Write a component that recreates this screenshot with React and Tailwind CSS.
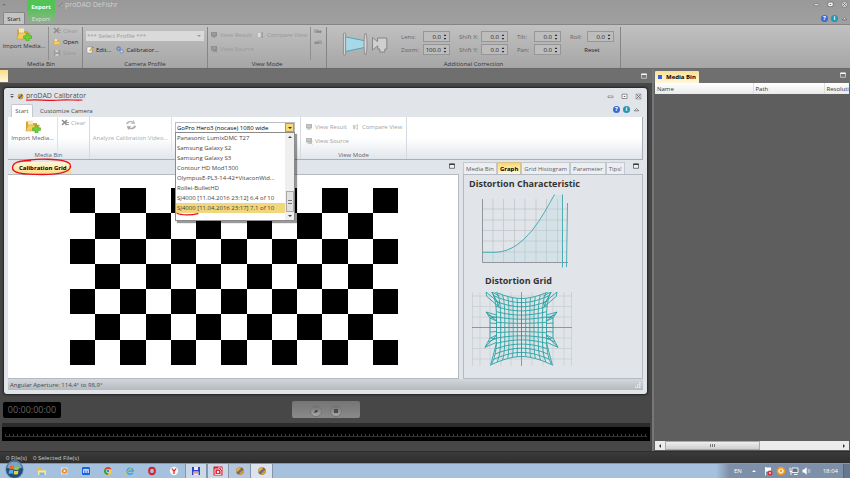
import { useState } from 'react'
import clsx from 'clsx'

const PROFILES = [
  'Panasonic LumixDMC T27',
  'Samsung Galaxy S2',
  'Samsung Galaxy S3',
  'Contour HD Mod1300',
  'OlympusE-PL3-14-42+VitaconWid...',
  'Rollei-BulletHD',
  'SJ4000 [11.04.2016 23:12] 6,4 of 10',
  'SJ4000 [11.04.2016 23:17] 7,1 of 10',
]

const CORRECTIONS = [
  [
    { id: 'lens', label: 'Lens:', value: '0.0' },
    { id: 'zoom', label: 'Zoom:', value: '100.0' },
  ],
  [
    { id: 'shiftx', label: 'Shift X:', value: '0.0' },
    { id: 'shifty', label: 'Shift Y:', value: '0.0' },
  ],
  [
    { id: 'tilt', label: 'Tilt:', value: '0.0' },
    { id: 'pan', label: 'Pan:', value: '0.0' },
  ],
]

// ---------- icons ----------

function FolderIcon({ plus, className }) {
  return (
    <svg viewBox="0 0 16 14" className={className}>
      <path d="M1 2.5h4.5l1 1.5H12v7.5H1z" fill="#d9a437" />
      <path d="M3 1.5h5v5H3z" fill="#f6e7b4" />
      <path d="M0.8 12 3 6h11.5L12 12z" fill="#f5cf63" stroke="#c79228" strokeWidth=".5" />
      {plus && <path d="M10 6.5h3v2.3h2.5v2.7H13V14h-3v-2.5H7.6V8.8H10z" fill="#6fd03a" stroke="#3f9a1c" strokeWidth=".5" />}
    </svg>
  )
}

function ClearIcon() {
  return (
    <svg viewBox="0 0 8 8" className="size-2">
      <path d="M1 1l5 5M6 1 1 6" stroke="#888" strokeWidth="1.4" />
      <path d="M4 3.5h4M4 5.5h4" stroke="#a0a0a0" />
    </svg>
  )
}

function SaveIcon() {
  return (
    <svg viewBox="0 0 8 8" className="size-2">
      <path d="M1 1h5.4l.8.8V7H1z" fill="#999" />
      <path d="M2.3 1h3v2.4h-3zM2.3 5h3.4v2H2.3z" fill="#ccc" />
    </svg>
  )
}

function EditIcon() {
  return (
    <svg viewBox="0 0 8 8" className="size-2">
      <path d="M1 1h5v6H1z" fill="#f4f4f4" stroke="#777" strokeWidth=".4" />
      <path d="m3 5.6.5-1.7L6.4.8l1.1 1-3 3.2z" fill="#e5a62d" />
      <path d="m6.1 1.1.6-.6 1 .9-.6.7z" fill="#b5432c" />
    </svg>
  )
}

function CalibratorIcon() {
  return (
    <svg viewBox="0 0 8 8" className="size-2">
      <circle cx="2.6" cy="2.6" r="1.7" fill="none" stroke="#6682b5" strokeWidth="1.2" />
      <circle cx="5.6" cy="5.4" r="1.6" fill="#cfd9ee" stroke="#6682b5" strokeWidth=".9" />
    </svg>
  )
}

function ViewIcon({ kind, dark }) {
  const c = dark ? '#8c8c8c' : '#b5b5b5'
  return (
    <svg viewBox="0 0 8 8" className="size-2 shrink-0">
      {kind === 'compare' ? (
        <>
          <path d="M1 2h2.5v4H1z" fill={dark ? '#ddd' : '#ccc'} />
          <path d="M4.5 1.5H6v1.2H4.5zM4.5 3.4H6v1.2H4.5zM4.5 5.3H6v1.2H4.5z" fill={c} />
        </>
      ) : (
        <>
          <path d="M1 1h6v4.4H1z" fill={c} />
          <path d="M2.5 5.4h3v1.2h-3z" fill={c} />
          <path d="M1.8 2.2h4M1.8 3.6h4" stroke={dark ? '#b5b5b5' : '#ddd'} strokeWidth=".5" />
          {kind === 'source' && <path d="m4.5 4 2.8 3.4M7.3 4 4.7 7.2" stroke={c} strokeWidth=".9" />}
        </>
      )}
    </svg>
  )
}

function SideIcon({ flip }) {
  return (
    <svg viewBox="0 0 8 8" className={clsx('size-2', flip && '-scale-x-100')}>
      <path d="M0 1.5h4.5v3.500H0z" fill="#a0a0a0" />
      <path d="M3 2.800h3V2l2 1.800-2 1.800v-.8H3z" fill="#8a8a8a" />
    </svg>
  )
}

function RefreshIcon() {
  return (
    <svg viewBox="0 0 12 12" className="size-3">
      <path d="M1 5.2C1.3 2.4 4.5.7 7.5 2.2L8.8.9l1.4 4.2-4.4-.3 1.3-1.2C5.3 2.8 3.6 3.6 3 5.2z" fill="#bdbdbd" />
      <path d="M11 6.8c-.3 2.8-3.5 4.5-6.5 3l-1.3 1.3-1.4-4.2 4.4.3-1.3 1.2c1.8.8 3.5 0 4.1-1.6z" fill="#a9a9a9" />
    </svg>
  )
}

function LensIcon() {
  return (
    <svg viewBox="0 0 46 24" className="h-6 w-[46px]">
      <path d="M4 5 22 8.6v7L4 19.3z" fill="#a6d9e7" />
      <path d="M4 5 22 8.6M22 15.600 4 19.300" stroke="#4d9fb5" strokeWidth=".9" />
      <rect x="1.400" y="1" width="2.200" height="22" rx="1" fill="#d5d5d5" stroke="#777" strokeWidth=".7" />
      <ellipse cx="23.500" cy="12" rx="1.500" ry="10.800" fill="#d5d5d5" stroke="#777" strokeWidth=".7" />
      <path d="M30.500 5.500 35.500 9.500V6h9.300v11h-2v3h-5v-3h-2v-3.200l-5.300 4.200z" fill="#cfcfcf" stroke="#777" strokeWidth=".8" />
    </svg>
  )
}

function AppIcon({ className = 'size-2', dim }) {
  return (
    <svg viewBox="0 0 10 10" className={className}>
      <circle cx="5" cy="5" r="3.800" fill={dim ? '#8b8b8b' : '#7a6a50'} />
      <path d="M1.400 6C.8 3 3.600.8 6 1.500L5 4.400z" fill={dim ? '#a8a8a8' : '#f0b13a'} />
      <path d="M8.800 4C9.300 7 6.600 9.200 4.200 8.500l1-3z" fill={dim ? '#a8a8a8' : '#e89b25'} />
      <circle cx="5" cy="5" r="1.500" fill={dim ? '#888' : '#5a73a0'} />
    </svg>
  )
}

function WindowButtons() {
  return (
    <div className="flex gap-[7px]">
      <button aria-label="Minimize">
        <svg viewBox="0 0 7 7" className="size-[7px]">
          <path d="M1 3h5v1.600H1z" fill="#fff" stroke="#666" strokeWidth=".6" />
        </svg>
      </button>
      <button aria-label="Restore">
        <svg viewBox="0 0 7 7" className="size-[7px]">
          <path d="M1 1.200h5v4.300H1z" fill="#fff" stroke="#666" strokeWidth=".7" />
          <path d="M2.700 2.900h1.600v1H2.700z" fill="#555" />
        </svg>
      </button>
      <button aria-label="Close">
        <svg viewBox="0 0 7 7" className="size-[7px]">
          <path d="M1 1h5v5H1z" fill="#ddd" stroke="#777" strokeWidth=".5" />
          <path d="m1.500 1.500 4 4M5.500 1.500l-4 4" stroke="#666" strokeWidth=".8" />
        </svg>
      </button>
    </div>
  )
}

function HelpButtons() {
  return (
    <div className="flex items-center gap-[3px]">
      <button aria-label="Help" className="size-[7px] rounded-full bg-[#3a6bd0] text-[6px] leading-[7px] font-bold text-white">?</button>
      <button aria-label="Info" className="size-[7px] rounded-full bg-[#2295b8] text-[6px] leading-[7px] font-bold text-white">i</button>
      <button aria-label="Collapse ribbon">
        <svg viewBox="0 0 7 7" className="size-[7px]">
          <path d="M1.300 4.800 3.500 2.500l2.200 2.300z" fill="#fff" stroke="#555" strokeWidth=".7" />
        </svg>
      </button>
    </div>
  )
}

function PaneButton({ light }) {
  return (
    <button aria-label="Maximize pane">
      <svg viewBox="0 0 6 6" className="size-[6px]">
        <path d="M.5 1h5v4.300h-5z" fill={light ? '#777' : '#eef1f4'} stroke={light ? '#ddd' : '#444'} strokeWidth=".7" />
        <path d="M.3 1.300h5.400" stroke={light ? '#fff' : '#333'} strokeWidth="1.300" />
      </svg>
    </button>
  )
}

// ---------- ribbon parts ----------

function Group({ label, name, dark, className, children }) {
  return (
    <section
      aria-label={name}
      className={clsx(
        'flex shrink-0 flex-col border-r',
        dark ? 'border-[#858585] text-[#333]' : 'border-[#d5dae0] text-[#5c6470]',
        className
      )}
    >
      <div className="flex flex-1">{children}</div>
      {label && <h3 className="h-[8px] text-center">{label}</h3>}
    </section>
  )
}

function Tool({ icon, children, className, disabled }) {
  return (
    <button disabled={disabled} className={clsx('flex items-center gap-[2px]', className)}>
      {icon}
      <span>{children}</span>
    </button>
  )
}

function Spinner({ id, label, value, labelWidth }) {
  return (
    <div className="flex items-center">
      <label htmlFor={id} className={clsx('text-[#62666c]', labelWidth)}>{label}</label>
      <div className="flex h-[11px] w-[27px] items-center border border-[#969696] bg-[#bdbdbd] pr-[2px]">
        <input id={id} defaultValue={value} className="w-full min-w-0 bg-transparent pr-[2px] text-right text-[#222] outline-none" />
        <svg viewBox="0 0 4 8" className="h-2 w-1 shrink-0">
          <path d="M.7 3 2 1.300 3.300 3zM.7 5 2 6.700 3.300 5z" fill="#222" />
        </svg>
      </div>
    </div>
  )
}

function MainRibbon() {
  return (
    <div className="flex h-[45px] border-y border-t-[#858585] border-b-[#6a6a6a] bg-linear-to-b from-[#c1c1c1] to-[#a6a6a6] pt-[2px]">
      <Group label="Media Bin" dark className="w-[83px]">
        <div className="flex w-[49px] flex-col items-center border-r border-[#8f8f8f]">
          <button className="flex flex-col items-center gap-px">
            <FolderIcon plus className="h-[14px] w-4" />
            Import Media...
          </button>
        </div>
        <div className="flex flex-col gap-[3px] pl-[4px]">
          <Tool disabled icon={<ClearIcon />} className="text-[#999]">Clear</Tool>
          <Tool icon={<FolderIcon className="size-2" />} className="text-[#222]">Open</Tool>
          <Tool disabled icon={<SaveIcon />} className="text-[#999]">Save</Tool>
        </div>
      </Group>

      <Group label="Camera Profile" dark className="w-[125px]">
        <div className="flex flex-1 flex-col gap-[5px] px-[3px] pt-[4px]">
          <div className="relative flex h-[10px] items-center bg-[#dadada]">
            <select aria-label="Camera profile" className="w-full appearance-none bg-transparent pl-[1px] text-[#999] outline-none">
              <option>*** Select Profile ***</option>
            </select>
            <span className="absolute right-[3px] border-x-2 border-t-2 border-x-transparent border-t-[#999]" />
          </div>
          <div className="flex gap-[5px] text-[#222]">
            <Tool icon={<EditIcon />}>Edit...</Tool>
            <Tool icon={<CalibratorIcon />}>Calibrator...</Tool>
          </div>
        </div>
      </Group>

      <Group label="View Mode" dark className="w-[119px]">
        <div className="flex w-[103px] flex-col gap-[6px] border-r border-[#8f8f8f] pt-[4px] pl-[2px] text-[#999]">
          <div className="flex gap-[5px]">
            <Tool disabled icon={<ViewIcon dark />}>View Result</Tool>
            <Tool disabled icon={<ViewIcon dark kind="compare" />}>Compare View</Tool>
          </div>
          <Tool disabled icon={<ViewIcon dark kind="source" />}>View Source</Tool>
        </div>
        <div className="flex flex-col gap-[3px] pt-[1px] pl-[3px]">
          <SideIcon />
          <SideIcon flip />
        </div>
      </Group>

      <Group label="Additional Correction" dark className="w-[294px]">
        <div className="pt-[5px] pl-[15px]">
          <LensIcon />
        </div>
        <div className="flex gap-[9px] pt-[4px] pl-[13px]">
          {CORRECTIONS.map((col, i) => (
            <div key={i} className="flex flex-col gap-[2px]">
              {col.map((f) => (
                <Spinner key={f.id} {...f} labelWidth={i === 2 ? 'w-[17px]' : 'w-[22px]'} />
              ))}
            </div>
          ))}
          <div className="flex flex-col gap-[2px]">
            <Spinner id="roll" label="Roll:" value="0.0" labelWidth="w-[17px]" />
            <button className="h-[11px] text-[#222]">Reset</button>
          </div>
        </div>
      </Group>
    </div>
  )
}

// ---------- calibrator window ----------

function ProfileDropdown() {
  const [active, setActive] = useState(7)
  return (
    <div className="relative h-[11px] w-[120px] text-[#444]">
      <div className="flex h-[11px] items-center border border-[#b9bec5] bg-white">
        <select aria-label="Calibration profile" className="min-w-0 flex-1 appearance-none bg-transparent pl-[1px] text-black outline-none">
          <option>GoPro Hero3 (nocase) 1080 wide</option>
        </select>
        <button aria-label="Open list" className="flex h-[9px] w-[9px] items-center justify-center border border-[#c29b3a] bg-[#fbd977]">
          <span className="border-x-2 border-t-2 border-x-transparent border-t-[#333]" />
        </button>
      </div>
      <div className="absolute top-[10px] left-0 z-10 flex h-[89px] w-[120px] border border-[#8c8c8c] bg-white shadow-[2px_2px_1px_rgba(0,0,0,.4)]">
        <ul role="listbox" aria-label="Profiles" className="min-w-0 flex-1">
          {PROFILES.map((name, i) => (
            <li
              key={name}
              role="option"
              aria-selected={i === active}
              onClick={() => setActive(i)}
              className={clsx('h-[10px] overflow-hidden pl-[1px] leading-[10px]', i === active && 'bg-[#f1d67b]')}
            >
              {name}
            </li>
          ))}
        </ul>
        <div className="flex w-[9px] flex-col items-center justify-between bg-[#efefef] py-[3px]">
          <span className="border-x-2 border-b-2 border-x-transparent border-b-[#444]" />
          <span className="mt-auto mb-[3px] flex h-[21px] w-[8px] items-center justify-center border border-[#a9a9a9] bg-[#e2e2e2]">
            <span className="h-[4px] w-[4px] border-y border-[#777]" />
          </span>
          <span className="border-x-2 border-t-2 border-x-transparent border-t-[#444]" />
        </div>
        <svg viewBox="0 0 24 4" className="absolute bottom-[4px] left-0 h-1 w-6">
          <path d="M1 1.200c4 2 14 2.200 21 .4" fill="none" stroke="#e8101c" strokeWidth="1.200" strokeLinecap="round" />
        </svg>
      </div>
    </div>
  )
}

function CalibratorRibbon() {
  return (
    <div className="flex h-[43px] border-r border-b border-[#a9afb6] bg-linear-to-b from-white from-50% to-[#e1e6eb]">
      <Group label="Media Bin" className="w-[82px]">
        <div className="flex w-[50px] flex-col items-center border-r border-[#e0e3e6] pt-[2px]">
          <button className="flex flex-col items-center gap-px">
            <FolderIcon plus className="h-[14px] w-4" />
            Import Media...
          </button>
        </div>
        <div className="pt-[2px] pl-[3px]">
          <Tool disabled icon={<ClearIcon />} className="text-[#aaa]">Clear</Tool>
        </div>
      </Group>
      <Group name="Camera Profile" className="w-[211px]">
        <button disabled className="flex h-[34px] w-[82px] flex-col items-center gap-[3px] border-r border-[#e0e3e6] pt-[2px] text-[#aaa]">
          <RefreshIcon />
          Analyze Calibration Video...
        </button>
        <div className="pt-[5px] pl-[3px]">
          <ProfileDropdown />
        </div>
      </Group>
      <Group label="View Mode" className="w-[106px]">
        <div className="flex flex-col gap-[6px] pt-[6px] pl-[4px] text-[#a3a3a3]">
          <div className="flex gap-[5px]">
            <Tool disabled icon={<ViewIcon />}>View Result</Tool>
            <Tool disabled icon={<ViewIcon kind="compare" />}>Compare View</Tool>
          </div>
          <Tool disabled icon={<ViewIcon kind="source" />}>View Source</Tool>
        </div>
      </Group>
    </div>
  )
}

function Checkerboard() {
  return (
    <div className="grid h-[177px] w-[328px] grid-cols-[repeat(13,1fr)] grid-rows-[repeat(7,1fr)]">
      {Array.from({ length: 91 }, (_, i) => (
        <span key={i} className={i % 2 === 0 ? 'bg-black' : 'bg-white'} />
      ))}
    </div>
  )
}

function CharacteristicChart() {
  return (
    <svg viewBox="0 0 88 74" className="h-[74px] w-[88px]">
      <path
        d="M11 5v64M21.500 5v64M32.500 5v64M43 5v64M54 5v64M64.500 5v64M75.500 5v64M.5 15h85M.5 26h85M.5 36.500h85M.5 47h85M.5 58h85"
        stroke="#bcc3c9"
        strokeWidth=".7"
      />
      <path d="M.5 58.300H14C30 57.500 41 47 50 36.500 59 25.500 66 12 72.500.5h8V68.500H.5z" fill="#b5dbe3" fillOpacity=".3" />
      <path d="M.5 5v63.500h85.500" fill="none" stroke="#7d8388" strokeWidth=".8" />
      <path d="M.5 58.300H14C30 57.500 41 47 50 36.500 59 25.500 66 12 72.500.5M80.500.5v73M84.500 73l1-64" fill="none" stroke="#3ba6ab" strokeWidth=".9" />
    </svg>
  )
}

function DistortionGrid() {
  const cx = 49.5
  const cy = 35.5
  // pincushion: rows bow outwards at the sides, columns flare at the corners
  const point = (u, v) => {
    const x = cx + u * 25 * (1 + 0.2 * v ** 4 * Math.abs(u))
    const y = cy + v * 29 * (1 + 0.28 * u * u)
    return `${x.toFixed(1)} ${y.toFixed(1)}`
  }
  const steps = Array.from({ length: 13 }, (_, i) => (i - 6) / 6)
  const lines = []
  for (let i = 0; i < 13; i++) {
    const k = (i - 6) / 6
    lines.push('M' + steps.map((s) => point(k, s)).join('L'))
  }
  for (let i = 0; i < 15; i++) {
    const k = (i - 7) / 7
    lines.push('M' + steps.map((s) => point(s, k)).join('L'))
  }
  // folded border cells, drawn once and mirrored
  const ears =
    'M14 0l.7 4.300 11.600 10 1-3.300L14 0M19.700 0l5 8.700 1.600 5.600M19.700 0l8 4' +
    'M14 20l10.500 3M14 20l10.700 9M14 20l4 6v20l-5 9.300 11.500-5M18 26l6.500 3M18 26l6.500-1M18 31l7 .5M18 35.500h7M18 40l7-.5' +
    'M18.500 46l6-3M18.500 46l6 1M13 55.300l11.700-12M16 23l9 3M16 50l9-4M24.500 51l-6 22.500'
  return (
    <svg viewBox="0 0 100 74" className="h-[74px] w-[100px]">
      <path
        d="M8 0v74M18 0v74M29 0v74M39 0v74M60 0v74M71 0v74M81 0v74M92 0v74M.5 0v74M99.500 0v74M0 4h100M0 14.500h100M0 25h100M0 46h100M0 56.500h100M0 67h100"
        stroke="#c6ccd1"
        strokeWidth=".7"
      />
      <path d="M49.500 0v74M0 35.500h100" stroke="#7d8388" strokeWidth=".8" />
      <g fill="none" stroke="#1f9f9f" strokeWidth=".85">
        <path d={lines.join('')} />
        <path d={ears} />
        <path d={ears} transform="matrix(-1 0 0 1 99 0)" />
      </g>
    </svg>
  )
}

function Calibrator() {
  const tabs = ['Media Bin', 'Graph', 'Grid Histogram', 'Parameter', 'Tips!']
  const [tab, setTab] = useState('Graph')
  return (
    <div className="mt-[5px] mr-[5px] ml-[4px] flex flex-col rounded-[3px] bg-[#e1e5e9] px-[4px] pb-[4px] shadow-[0_0_2px_1px_#222]">
      <header className="flex h-[16px] items-center pl-px text-[#4c5058]">
        <svg viewBox="0 0 6 6" className="size-[6px]">
          <path d="M1.500 1.500h3" stroke="#555" strokeWidth=".8" />
          <path d="M1.200 3h3.600L3 5z" fill="#555" />
        </svg>
        <AppIcon className="mx-[2px] size-[7px]" />
        <h2 className="relative text-[7px]">
          proDAD Calibrator
          <svg viewBox="0 0 58 4" className="absolute -bottom-[2px] left-0 h-1 w-[58px]">
            <path d="M.6 2.200C14 1 18 3 30 2.200S48 2.400 56 2" fill="none" stroke="#e8101c" strokeWidth="1.100" strokeLinecap="round" />
          </svg>
        </h2>
        <div className="ml-auto pr-px">
          <WindowButtons />
        </div>
      </header>

      <nav className="flex h-[13px] items-end pl-[3px]">
        <button className="h-[13px] w-[22px] rounded-t-[2px] border border-b-0 border-[#c3c9cf] bg-white text-[#555]">Start</button>
        <button className="h-[13px] px-[7px] text-[#444]">Customize Camera</button>
        <div className="ml-auto h-[13px] pt-[2px] pr-[3px]">
          <HelpButtons />
        </div>
      </nav>

      <CalibratorRibbon />

      <div className="flex gap-[4px]">
        <div className="flex flex-1 flex-col">
          <div className="flex h-[14px] items-end justify-between pr-[4px] pl-[6px]">
            <button className="relative h-[12px] rounded-t-[2px] bg-linear-to-b from-[#fff6d8] to-[#fbdc85] px-[5px] font-bold text-black">
              Calibration Grid
              <svg viewBox="0 0 64 20" className="absolute -top-[4px] -left-[3px] h-5 w-16">
                <path d="M8 4C22 0 54 0 59 6c3 7-8 10.500-28 10.500S1 15 1.500 9.500 8 3 20 2.500" fill="none" stroke="#e8101c" strokeWidth="1.300" />
              </svg>
            </button>
            <div className="self-center">
              <PaneButton />
            </div>
          </div>
          <div className="flex-1 border border-l-0 border-[#b4bac1] bg-white py-[13px] pl-[62px]">
            <Checkerboard />
          </div>
        </div>

        <div className="flex w-[180px] flex-col">
          <div className="flex h-[14px] items-end pr-[4px]">
            {tabs.map((t) => (
              <button
                key={t}
                onClick={() => setTab(t)}
                className={clsx(
                  'h-[12px] border border-b-0 px-[2px]',
                  t === tab
                    ? 'border-[#d9c486] bg-linear-to-b from-[#fbd768] to-[#fff8e0] font-bold text-black'
                    : 'border-[#c3c9cf] bg-[#eceff2] text-[#5c6068]'
                )}
              >
                {t}
              </button>
            ))}
            <div className="ml-auto self-center">
              <PaneButton />
            </div>
          </div>
          <div className="flex-1 border border-[#b4bac1] pl-[5px]">
            <h2 className="mt-[3px] text-[9px] leading-[12px] font-bold text-[#333]">Distortion Characteristic</h2>
            <div className="mt-[4px] ml-[13px]">
              <CharacteristicChart />
            </div>
            <h2 className="mt-[7px] ml-[16px] text-[9px] leading-[12px] font-bold text-[#333]">Distortion Grid</h2>
            <div className="mt-[5px] ml-[3px]">
              <DistortionGrid />
            </div>
          </div>
        </div>
      </div>

      <footer className="flex h-[11px] items-center justify-between bg-linear-to-b from-[#d3d7db] to-[#b5babf] px-[2px] text-[#44484e]">
        <span>Angular Aperture: 114,4° to 98,9°</span>
        <svg viewBox="0 0 6 6" className="size-[6px]">
          <path d="M4 0h1.500v1.500H4zM4 2.200h1.500v1.500H4zM4 4.400h1.500v1.500H4zM2 2.200h1.300v1.500H2zM2 4.400h1.300v1.500H2zM0 4.400h1.300v1.500H0z" fill="#eee" />
        </svg>
      </footer>
    </div>
  )
}

// ---------- player ----------

function Player() {
  return (
    <div className="flex flex-col">
      <div className="mt-[7px] grid grid-cols-[1fr_auto_1fr] items-center px-[3px]">
        <time className="flex h-[16px] w-[58px] items-center justify-center rounded-[2px] bg-black text-[9px] text-[#666]">00:00:00:00</time>
        <div className="flex h-[17px] w-[68px] items-end justify-center gap-[8px] rounded-[2px] bg-linear-to-b from-[#757575] to-[#8a8a8a] pb-px">
          <button aria-label="Play" className="flex size-[12px] items-center justify-center rounded-full border border-[#777] bg-linear-to-b from-[#6f6f6f] to-[#aaa]">
            <svg viewBox="0 0 6 6" className="size-[6px]"><path d="M1 5 2.500 2 5.500 2.500 3.500 4.500z" fill="#444" /></svg>
          </button>
          <button aria-label="Stop" className="flex size-[12px] items-center justify-center rounded-full border border-[#777] bg-linear-to-b from-[#6f6f6f] to-[#aaa]">
            <span className="size-[4px] bg-[#4c4c4c]" />
          </button>
        </div>
      </div>
      <div className="mx-[2px] mt-[5px] h-[18px] border-t-4 border-[#2b2b2b] bg-black px-[3px] pt-[7px]">
        <div className="h-[3px] border-b border-[#333] bg-[repeating-linear-gradient(90deg,#3c3c3c_0_1px,transparent_1px_4px)]" />
      </div>
    </div>
  )
}

function MediaBin() {
  return (
    <aside className="flex w-[198px] shrink-0 flex-col border-l-2 border-[#777] bg-[#5e5e5e]">
      <div className="flex h-[14px] items-end justify-between bg-[#6f6f6f] pr-[4px] pl-px">
        <button className="flex h-[12px] items-center gap-[4px] rounded-t-[1px] bg-linear-to-b from-[#fbe092] to-[#fff6dc] px-[3px] font-bold text-black">
          <span className="size-[4px] bg-[#3262e8]" />
          Media Bin
        </button>
        <div className="self-center">
          <PaneButton light />
        </div>
      </div>
      <table className="mx-px table-fixed text-left text-[#333]">
        <thead>
          <tr className="h-[11px] bg-linear-to-b from-white to-[#eaeaea]">
            <th className="w-[98px] border-r border-[#ddd] pl-[2px] font-normal">Name</th>
            <th className="w-[71px] border-r border-[#ddd] pl-[2px] font-normal">Path</th>
            <th className="overflow-hidden pl-[2px] font-normal">Resoluti</th>
          </tr>
        </thead>
      </table>
      <div className="mx-px mt-auto mb-px flex h-[9px] items-center bg-[#ececec]">
        <button aria-label="Scroll left" className="flex w-[10px] justify-center">
          <span className="border-y-2 border-r-2 border-y-transparent border-r-[#333]" />
        </button>
        <div className="flex h-[9px] w-[95px] items-center justify-center gap-px border border-[#aaa] bg-linear-to-b from-[#eee] to-[#cfcfcf]">
          <span className="h-[3px] w-px bg-[#777]" />
          <span className="h-[3px] w-px bg-[#777]" />
          <span className="h-[3px] w-px bg-[#777]" />
        </div>
        <button aria-label="Scroll right" className="ml-auto flex w-[10px] justify-center">
          <span className="border-y-2 border-l-2 border-y-transparent border-l-[#333]" />
        </button>
      </div>
    </aside>
  )
}

// ---------- taskbar ----------

const PINNED = [
  {
    name: 'Explorer',
    art: (
      <>
        <path d="M1 2h3l1 1h4v6H1z" fill="#e3bd57" />
        <path d="M1 4.500h8V9H1z" fill="#f8e7a3" />
        <path d="M2.500 6.500h5V9h-5z" fill="#7fb4dd" />
      </>
    ),
  },
  {
    name: 'Media Player',
    art: (
      <>
        <path d="M2 1.500h6.500v7H2z" fill="#d7e4f0" />
        <circle cx="5.500" cy="5" r="2.800" fill="#ee8b2b" />
        <path d="M4.700 3.600 7 5 4.700 6.400z" fill="#fff" />
      </>
    ),
  },
  {
    name: 'Maxthon',
    art: (
      <>
        <rect x="1" y="1" width="8" height="8" rx="1" fill="#1a63e0" />
        <path d="M2.800 7V3.800h4.400V7M5 4v3" fill="none" stroke="#fff" strokeWidth="1.100" />
      </>
    ),
  },
  {
    name: 'Chrome',
    art: (
      <>
        <circle cx="5" cy="5" r="4" fill="#f5c92c" />
        <path d="M5 5 1.500 3A4 4 0 0 1 8.600 3.200H5z" fill="#dc3b2e" />
        <path d="M1.500 3A4 4 0 0 0 4.700 9L6 5.500 5 5z" fill="#2fa14d" />
        <circle cx="5" cy="5" r="1.900" fill="#fff" />
        <circle cx="5" cy="5" r="1.400" fill="#3b7de0" />
      </>
    ),
  },
  {
    name: 'Internet Explorer',
    art: (
      <>
        <path d="M7.800 6.800A3.100 3.100 0 1 1 8.200 5H3" fill="none" stroke="#35a6e2" strokeWidth="1.500" />
        <path d="M1.500 8.800C0 7 6 .5 9 1.500" fill="none" stroke="#eec13a" strokeWidth=".8" />
      </>
    ),
  },
  { name: 'Opera', art: <ellipse cx="5" cy="5" rx="2.900" ry="3.200" fill="none" stroke="#d81f2c" strokeWidth="1.900" /> },
  {
    name: 'Yandex',
    art: (
      <>
        <circle cx="5" cy="5" r="4.200" fill="#f4f4f4" />
        <path d="m3 2.500 2 3 2-3M5 5.300V8" fill="none" stroke="#e02020" strokeWidth="1.200" />
      </>
    ),
  },
]

const RUNNING = [
  {
    name: 'Total Commander',
    art: (
      <>
        <path d="M1 1h8v8H1z" fill="#2c45c4" />
        <path d="M3 1h4v3H3z" fill="#e8ecff" />
        <path d="M2.500 5.500h5V9h-5z" fill="#fff" />
        <path d="M3 6.500h4M3 7.700h4" stroke="#c33" strokeWidth=".5" />
      </>
    ),
  },
  {
    name: 'Capture',
    art: (
      <>
        <path d="M.5.5h9v9h-9z" fill="#d8212f" />
        <path d="M2 3h4l2 2v3.500H2z" fill="none" stroke="#fff" strokeWidth=".8" />
        <circle cx="5" cy="6" r="1.200" fill="#fff" />
        <path d="M5 1.800h3.500V4" fill="none" stroke="#fff" strokeWidth=".7" />
      </>
    ),
  },
]

function Taskbar() {
  return (
    <footer className="flex h-[15px] items-center border-t border-[#8296ad] bg-[#a6c1de] text-white">
      <button aria-label="Start menu" className="relative z-10 -mt-[4px] ml-[5px] w-[26px]">
        <svg viewBox="0 0 20 20" className="size-[19px]">
          <circle cx="10" cy="10" r="9.300" fill="#1f4f7d" stroke="#7fa6c8" strokeWidth=".8" />
          <path d="M2 8a8.300 8.300 0 0 1 16 0c-5 2.500-11 2.500-16 0z" fill="#78a5c9" />
          <path d="M5 6.500c1.500-1 3-.9 4.500-.2L9 10c-1.500-.7-3-.7-4.500.1z" fill="#ee6a2c" />
          <path d="M10.300 6.600c1.500.7 3 .7 4.700-.2l-.6 3.700c-1.500.8-3 .8-4.600.2z" fill="#94c83d" />
          <path d="M4.300 11c1.500-.8 3-.8 4.500-.1l-.5 3.700c-1.500-.7-3-.6-4.500.2z" fill="#4fb0ea" />
          <path d="M9.600 11.200c1.500.6 3 .7 4.600-.1l-.6 3.600c-1.500.9-3 .8-4.500.2z" fill="#fbc72e" />
        </svg>
      </button>
      {PINNED.map((app) => (
        <button key={app.name} aria-label={app.name} className="flex w-[22px] justify-center">
          <svg viewBox="0 0 10 10" className="size-[10px]">{app.art}</svg>
        </button>
      ))}
      {RUNNING.map((app) => (
        <button key={app.name} aria-label={app.name} className="flex h-[14px] w-[22px] items-center justify-center border-x border-[#8295ab] bg-[#c9d7e6]">
          <svg viewBox="0 0 10 10" className="size-[10px]">{app.art}</svg>
        </button>
      ))}
      <button aria-label="DeFishr" className="flex h-[14px] w-[22px] items-center justify-center border-r border-[#8295ab] bg-[#b4c7dc]">
        <AppIcon className="size-[10px]" />
      </button>
      <button aria-label="Calibrator" className="flex h-[14px] w-[22px] items-center justify-center border-r border-[#8295ab] bg-[#dbe4ee]">
        <AppIcon className="size-[10px]" />
      </button>

      <div className="ml-auto flex h-[14px] w-[134px] items-center bg-linear-to-r from-[#a6c1de] to-[#7e90a8] to-10% pl-[18px]">
        <span className="w-[18px]">EN</span>
        <span className="border-x-2 border-b-2 border-x-transparent border-b-white" />
        <div className="flex gap-[3px] pl-[8px]">
          <svg viewBox="0 0 9 10" className="h-[10px] w-[9px]">
            <path d="M1.500 1v8.500" stroke="#fff" strokeWidth=".9" />
            <path d="M2 1.500h5v4H2z" fill="#fff" />
            <circle cx="6" cy="7" r="2.500" fill="#d6303a" />
            <path d="m5 6 2 2M7 6 5 8" stroke="#fff" strokeWidth=".6" />
          </svg>
          <svg viewBox="0 0 10 10" className="size-[10px]">
            <circle cx="5" cy="5" r="4.300" fill="#f59a1b" />
            <circle cx="5" cy="5" r="2" fill="none" stroke="#fff" strokeWidth="1.200" />
          </svg>
          <svg viewBox="0 0 10 10" className="size-[10px]">
            <path d="M3 2h6v4.500H3z" fill="#60738b" stroke="#fff" strokeWidth=".9" />
            <path d="M1 1.500v4h2M5 8.500h3.500M2 5v4" stroke="#fff" fill="none" strokeWidth=".9" />
          </svg>
          <svg viewBox="0 0 9 10" className="h-[10px] w-[9px]">
            <path d="M.5 3.500h1.800L4.600 1v8L2.300 6.500H.5z" fill="#fff" />
            <path d="M6 3q1 2 0 4M7.500 3q1 2 0 4" fill="none" stroke="#dde6f0" strokeWidth=".6" />
          </svg>
        </div>
        <time className="ml-auto pr-[5px]">18:04</time>
        <button aria-label="Show desktop" className="h-[14px] w-[7px] border-l border-[#56677d] bg-[#66788f]" />
      </div>
    </footer>
  )
}

export default function App() {
  return (
    <div className="flex min-h-screen flex-col bg-[#474747] font-['Open_Sans',sans-serif] text-[6px] leading-[8px] whitespace-nowrap">
      <header className="flex h-[24px] bg-linear-to-b from-[#999] to-[#a0a0a0]">
        <div className="flex w-[27px] flex-col justify-between">
          <span className="mt-[4px] ml-[2px] w-0 border-x-2 border-t-2 border-x-transparent border-t-[#777]" />
          <button className="ml-[3px] h-[12px] w-[22px] rounded-t-[2px] border border-b-0 border-[#868686] bg-[#c4c4c4] text-[#222]">Start</button>
        </div>
        <div className="flex w-[28px] flex-col items-center bg-linear-to-b from-[#52c455] from-40% to-[#98a898]">
          <span className="flex h-[13px] items-center font-bold text-white">Export</span>
          <button className="h-[11px] text-[#dbe8db]">Export</button>
        </div>
        <div className="flex h-[9px] items-center gap-px pl-[2px] text-[7px] text-[#cfcfcf]">
          <AppIcon dim className="size-[7px]" />
          proDAD DeFishr
        </div>
        <div className="ml-auto flex flex-col items-end gap-[7px] pt-px pr-[2px]">
          <WindowButtons />
          <HelpButtons />
        </div>
      </header>

      <MainRibbon />

      <div className="flex flex-1">
        <main className="flex min-w-0 flex-1 flex-col">
          <div className="flex h-[14px] items-center justify-between bg-[#6f6f6f] pr-[5px]">
            <span className="h-[12px] w-[8px] bg-linear-to-b from-[#fbdc85] to-[#fff6dc]" />
            <PaneButton light />
          </div>
          <Calibrator />
          <Player />
        </main>
        <MediaBin />
      </div>

      <div className="flex h-[12px] items-center gap-[6px] border-t border-[#2e2e2e] bg-linear-to-b from-[#3a3a3a] to-[#2e2e2e] pl-[6px] text-[#ccc]">
        <span>0 File(s)</span>
        <span>0 Selected File(s)</span>
      </div>
      <Taskbar />
    </div>
  )
}
